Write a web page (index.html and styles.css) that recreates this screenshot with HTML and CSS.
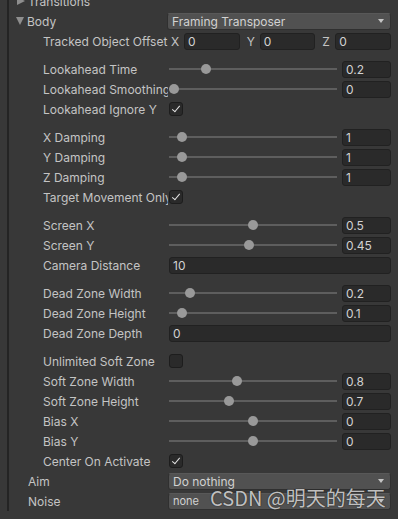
FILE: index.html
```html
<!DOCTYPE html>
<html lang="en">
<head>
  <meta charset="UTF-8" />
  <title>Inspector</title>
  <link rel="stylesheet" href="styles.css">
</head>
<body>
  <div class="panel">
    <div class="list">
      <div class="row top">
        <span class="fold closed"></span><span class="label">Transitions</span>
      </div>
      <div class="row top">
        <span class="fold open"></span><span class="label">Body</span>
        <div class="dropdown"><span>Framing Transposer</span><span class="arrow"></span></div>
      </div>
      <div class="row">
        <span class="label">Tracked Object Offset</span>
        <div class="vector">
          <div class="axis"><span>X</span><div class="field">0</div></div>
          <div class="axis"><span>Y</span><div class="field">0</div></div>
          <div class="axis"><span>Z</span><div class="field">0</div></div>
        </div>
      </div>

      <div class="space"></div>
      <div class="row"><span class="label">Lookahead Time</span><div class="slider"><div class="track"><span class="thumb" style="left: 31.6px"></span></div></div><div class="field num">0.2</div></div>
      <div class="row"><span class="label">Lookahead Smoothing</span><div class="slider"><div class="track"><span class="thumb" style="left: 0px"></span></div></div><div class="field num">0</div></div>
      <div class="row"><span class="label">Lookahead Ignore Y</span><span class="check on"></span></div>

      <div class="space"></div>
      <div class="row"><span class="label">X Damping</span><div class="slider"><div class="track"><span class="thumb" style="left: 7.9px"></span></div></div><div class="field num">1</div></div>
      <div class="row"><span class="label">Y Damping</span><div class="slider"><div class="track"><span class="thumb" style="left: 7.9px"></span></div></div><div class="field num">1</div></div>
      <div class="row"><span class="label">Z Damping</span><div class="slider"><div class="track"><span class="thumb" style="left: 7.9px"></span></div></div><div class="field num">1</div></div>
      <div class="row"><span class="label">Target Movement Only</span><span class="check on"></span></div>

      <div class="space"></div>
      <div class="row"><span class="label">Screen X</span><div class="slider"><div class="track"><span class="thumb" style="left: 79px"></span></div></div><div class="field num">0.5</div></div>
      <div class="row"><span class="label">Screen Y</span><div class="slider"><div class="track"><span class="thumb" style="left: 75px"></span></div></div><div class="field num">0.45</div></div>
      <div class="row"><span class="label">Camera Distance</span><div class="field wide">10</div></div>

      <div class="space"></div>
      <div class="row"><span class="label">Dead Zone Width</span><div class="slider"><div class="track"><span class="thumb" style="left: 15.8px"></span></div></div><div class="field num">0.2</div></div>
      <div class="row"><span class="label">Dead Zone Height</span><div class="slider"><div class="track"><span class="thumb" style="left: 7.9px"></span></div></div><div class="field num">0.1</div></div>
      <div class="row"><span class="label">Dead Zone Depth</span><div class="field wide">0</div></div>

      <div class="space"></div>
      <div class="row"><span class="label">Unlimited Soft Zone</span><span class="check"></span></div>
      <div class="row"><span class="label">Soft Zone Width</span><div class="slider"><div class="track"><span class="thumb" style="left: 63.2px"></span></div></div><div class="field num">0.8</div></div>
      <div class="row"><span class="label">Soft Zone Height</span><div class="slider"><div class="track"><span class="thumb" style="left: 55.3px"></span></div></div><div class="field num">0.7</div></div>
      <div class="row"><span class="label">Bias X</span><div class="slider"><div class="track"><span class="thumb" style="left: 79px"></span></div></div><div class="field num">0</div></div>
      <div class="row"><span class="label">Bias Y</span><div class="slider"><div class="track"><span class="thumb" style="left: 79px"></span></div></div><div class="field num">0</div></div>
      <div class="row"><span class="label">Center On Activate</span><span class="check on"></span></div>

      <div class="row top">
        <span class="label">Aim</span>
        <div class="dropdown"><span>Do nothing</span><span class="arrow"></span></div>
      </div>
      <div class="row top">
        <span class="label">Noise</span>
        <div class="dropdown small"><span>none</span><span class="arrow"></span></div>
      </div>
    </div>
    <div class="watermark">CSDN @明天的每天</div>
  </div>
</body>
</html>
```

FILE: styles.css
```css
* {
  box-sizing: border-box;
}

body {
  margin: 0;
  background: #383838;
  font-family: Inter, "Noto Sans", sans-serif;
  font-size: 12px;
  color: #c4c4c4;
  overflow: hidden;
}

.panel {
  position: relative;
  height: 519px;
  margin-left: 7px;
  border-left: 2px solid #242424;
}

.list {
  margin-top: -8px;
  padding-right: 7px;
}

.row {
  display: flex;
  align-items: center;
  height: 18px;
  margin-bottom: 2px;
  padding-left: 34px;
}

.row.top {
  padding-left: 19px;
}

.space {
  height: 8px;
}

.label {
  width: 125px;
  flex-shrink: 0;
  white-space: nowrap;
  overflow: hidden;
}

.row.top .label {
  width: 140px;
}

.fold {
  width: 0;
  height: 0;
  margin-left: -12px;
  margin-right: 3px;
}

.fold.closed {
  border-top: 4.5px solid transparent;
  border-bottom: 4.5px solid transparent;
  border-left: 8px solid #8e8e8e;
  margin-left: -11px;
}

.fold.open {
  border-left: 4.5px solid transparent;
  border-right: 4.5px solid transparent;
  border-top: 8px solid #8e8e8e;
}

.dropdown {
  flex: 1;
  height: 17px;
  display: flex;
  align-items: center;
  justify-content: space-between;
  padding: 0 6px 0 4px;
  background: #515151;
  border: 1px solid #303030;
  border-top-color: #585858;
  border-radius: 3px;
  color: #d2d2d2;
}

.dropdown.small {
  font-size: 11px;
}

.arrow {
  width: 0;
  height: 0;
  border-left: 3.5px solid transparent;
  border-right: 3.5px solid transparent;
  border-top: 4px solid #c4c4c4;
}

.field {
  height: 17px;
  line-height: 15px;
  padding-left: 3px;
  background: #2a2a2a;
  border: 1px solid #212121;
  border-radius: 3px;
  color: #d2d2d2;
}

.field.num {
  width: 49px;
  flex-shrink: 0;
}

.field.wide {
  flex: 1;
  margin-left: 1px;
}

.vector {
  flex: 1;
  display: grid;
  grid-template-columns: 1fr 1fr 1fr;
  gap: 4px;
}

.axis {
  display: flex;
  align-items: center;
}

.axis span {
  width: 16px;
  flex-shrink: 0;
  padding-left: 3px;
}

.axis .field {
  flex: 1;
}

.slider {
  flex: 1;
  margin: 0 5px 0 1px;
}

.track {
  position: relative;
  height: 2px;
  background: #5e5e5e;
}

.thumb {
  position: absolute;
  top: -4px;
  width: 10px;
  height: 10px;
  border-radius: 50%;
  background: #999999;
}

.check {
  position: relative;
  width: 14px;
  height: 14px;
  margin-left: 1px;
  background: #2a2a2a;
  border: 1px solid #1d1d1d;
  border-radius: 3px;
}

.check.on::after {
  content: "";
  position: absolute;
  left: 4px;
  top: 1px;
  width: 3px;
  height: 7px;
  border-right: 1.5px solid #e4e4e4;
  border-bottom: 1.5px solid #e4e4e4;
  transform: rotate(40deg);
}

.watermark {
  position: absolute;
  left: 201px;
  top: 496px;
  font-family: "Noto Sans CJK SC", "Noto Sans", sans-serif;
  font-size: 20px;
  line-height: 20px;
  color: rgba(235, 235, 235, 0.8);
  text-shadow: 0 0 1px #222, 0 0 1px #222;
  white-space: nowrap;
}
```
